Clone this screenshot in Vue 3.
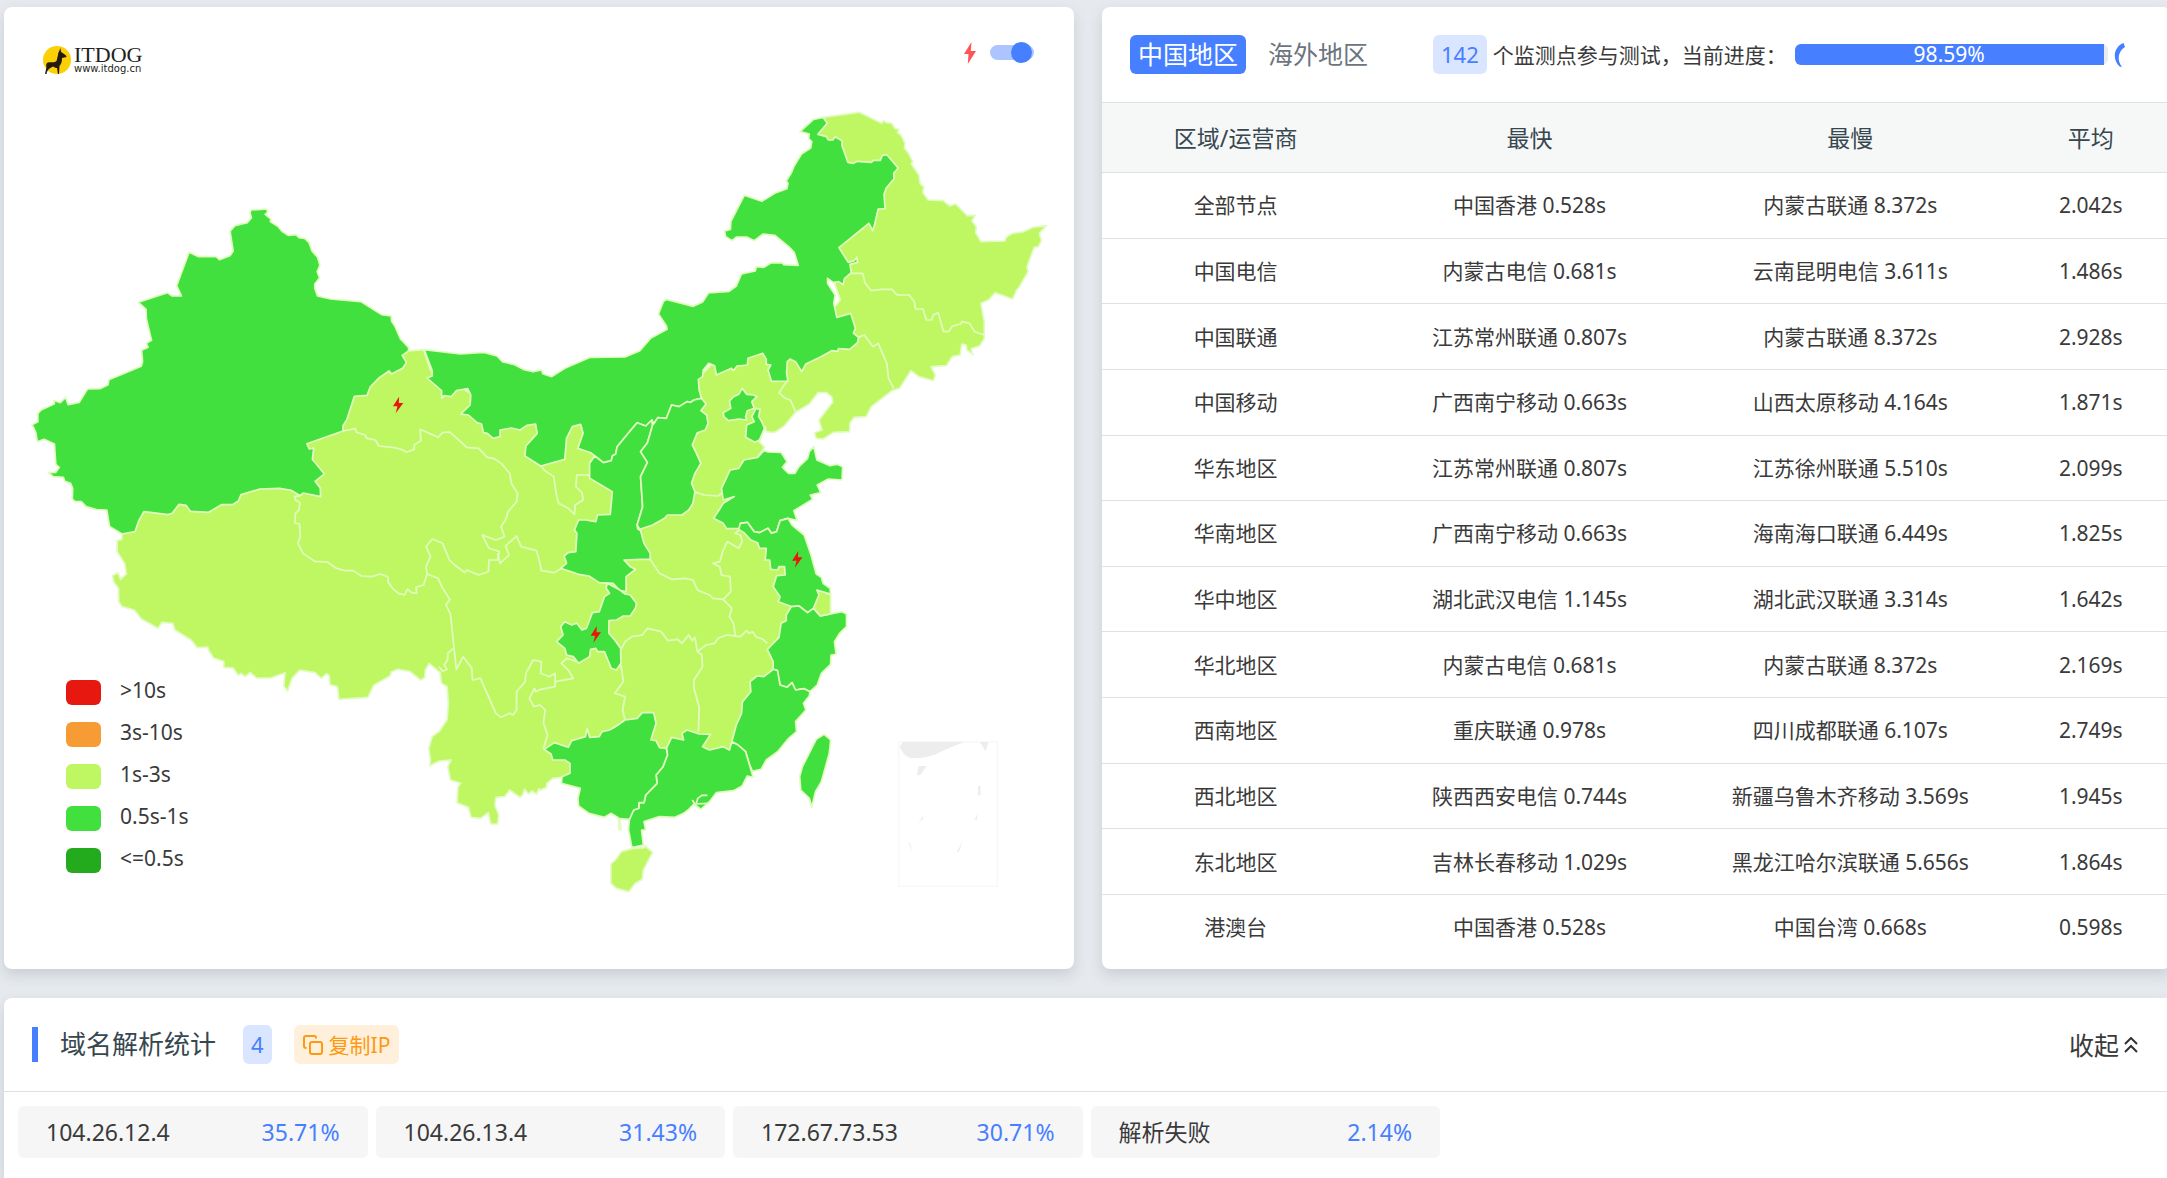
<script setup>
import { ref } from 'vue'

const showBolts = ref(true)

const legend = [
  { label: '>10s', level: 'l5' },
  { label: '3s-10s', level: 'l4' },
  { label: '1s-3s', level: 'l3' },
  { label: '0.5s-1s', level: 'l2' },
  { label: '<=0.5s', level: 'l1' },
]

const rows = [
  ['全部节点', '中国香港 0.528s', '内蒙古联通 8.372s', '2.042s'],
  ['中国电信', '内蒙古电信 0.681s', '云南昆明电信 3.611s', '1.486s'],
  ['中国联通', '江苏常州联通 0.807s', '内蒙古联通 8.372s', '2.928s'],
  ['中国移动', '广西南宁移动 0.663s', '山西太原移动 4.164s', '1.871s'],
  ['华东地区', '江苏常州联通 0.807s', '江苏徐州联通 5.510s', '2.099s'],
  ['华南地区', '广西南宁移动 0.663s', '海南海口联通 6.449s', '1.825s'],
  ['华中地区', '湖北武汉电信 1.145s', '湖北武汉联通 3.314s', '1.642s'],
  ['华北地区', '内蒙古电信 0.681s', '内蒙古联通 8.372s', '2.169s'],
  ['西南地区', '重庆联通 0.978s', '四川成都联通 6.107s', '2.749s'],
  ['西北地区', '陕西西安电信 0.744s', '新疆乌鲁木齐移动 3.569s', '1.945s'],
  ['东北地区', '吉林长春移动 1.029s', '黑龙江哈尔滨联通 5.656s', '1.864s'],
  ['港澳台', '中国香港 0.528s', '中国台湾 0.668s', '0.598s'],
]

const progress = 98.59

const addresses = [
  { ip: '104.26.12.4', share: '35.71%' },
  { ip: '104.26.13.4', share: '31.43%' },
  { ip: '172.67.73.53', share: '30.71%' },
  { ip: '解析失败', share: '2.14%' },
]

// Areas at the 1s-3s level: mainland base and Hainan.
const slowAreas = [
  '1150,1060 1186,1053 1230,1049 1250,1110 1400,1200 1560,1200 1900,1240 2010,1150 2100,1060 2240,1030 2360,1000 2440,900 2400,780 2440,640 2480,520 2420,440 2365,405 2390,352 2495,337 2560,370 2565,362 2575,368 2590,370 2598,385 2610,388 2606,398 2616,405 2628,430 2626,444 2638,460 2650,485 2646,492 2668,525 2672,552 2682,560 2680,578 2695,600 2738,602 2758,618 2775,612 2808,647 2832,646 2822,662 2835,680 2833,698 2848,725 2918,723 2922,712 2940,700 2970,696 3000,682 3038,677 3018,700 3024,722 3015,740 3003,742 2982,800 2985,815 2960,860 2952,870 2940,897 2890,878 2870,900 2848,910 2858,965 2858,1016 2845,1037 2820,1046 2825,1064 2808,1050 2805,1035 2793,1032 2788,1065 2765,1070 2748,1097 2703,1100 2716,1125 2710,1142 2668,1130 2645,1112 2612,1165 2590,1172 2530,1220 2515,1250 2480,1252 2468,1270 2467,1295 2420,1297 2390,1317 2370,1315 2365,1298 2387,1290 2378,1260 2418,1207 2415,1190 2400,1178 2375,1178 2350,1212 2310,1237 2275,1280 2248,1298 2225,1295 2222,1280 2205,1325 2220,1342 2200,1372 2250,1420 2280,1500 2280,1600 2340,1720 2372,1768 2412,1785 2412,1842 2400,1870 2350,1990 2300,2100 2200,2250 2150,2300 1950,2400 1750,2380 1660,2320 1628,2333 1605,2335 1588,2350 1587,2362 1568,2371 1565,2366 1558,2382 1545,2373 1535,2382 1523,2368 1518,2384 1510,2392 1480,2370 1465,2390 1440,2392 1437,2415 1448,2445 1445,2472 1425,2472 1418,2438 1395,2455 1368,2452 1360,2422 1327,2408 1330,2360 1338,2350 1308,2340 1300,2300 1310,2280 1275,2283 1248,2297 1250,2280 1245,2245 1255,2210 1275,2195 1298,2160 1302,2110 1298,2060 1282,2050 1278,2018 1246,1990 1235,2010 1233,2033 1221,2040 1190,2014 1155,2008 1137,2015 1132,2028 1085,2056 1068,2092 984,2098 980,2060 958,2054 956,2028 948,2021 933,2035 915,2018 870,2010 848,2035 835,2074 824,2058 828,2018 785,2034 745,2034 726,2017 712,2030 700,2020 692,2026 677,2004 650,2002 650,1984 620,1974 607,1953 603,1941 573,1943 555,1920 508,1890 502,1870 470,1867 459,1885 410,1856 390,1830 355,1820 345,1806 344,1765 330,1745 327,1727 342,1718 350,1738 367,1722 362,1690 340,1655 340,1622 354,1618 354,1602 500,1400 900,1300 1000,1150',
  '1804,2555 1835,2546 1870,2543 1872,2537 1895,2557 1868,2610 1865,2638 1845,2650 1825,2675 1790,2665 1774,2650 1774,2592 1790,2577',
]

// Areas at the 0.5s-1s level, one outline per province.
const fastAreas = [
  // Xinjiang
  '728,630 775,627 777,637 770,643 787,657 785,665 808,680 820,695 837,706 860,704 868,713 885,715 897,727 906,753 922,772 929,796 921,815 928,834 914,852 914,865 922,888 960,897 1048,905 1108,944 1136,948 1137,963 1147,979 1163,1017 1187,1043 1186,1053 1168,1066 1180,1087 1170,1104 1137,1122 1130,1113 1100,1134 1075,1161 1066,1186 1029,1189 1007,1259 996,1277 996,1293 891,1331 898,1347 911,1344 907,1378 942,1422 915,1444 930,1464 931,1490 880,1479 872,1487 845,1471 812,1465 755,1467 700,1484 692,1503 675,1514 643,1514 606,1537 553,1534 540,1516 520,1513 500,1540 488,1544 418,1535 403,1562 392,1595 354,1602 318,1579 310,1530 280,1529 250,1520 236,1505 218,1505 210,1497 211,1466 205,1450 188,1444 184,1432 155,1430 140,1418 162,1417 172,1402 162,1393 158,1332 128,1318 108,1325 104,1297 93,1274 110,1265 110,1240 118,1231 158,1211 156,1201 175,1208 190,1192 198,1214 230,1207 254,1167 290,1166 314,1154 316,1139 410,1099 414,1085 411,1051 430,1042 425,1030 440,1021 425,956 424,928 402,907 486,878 500,888 527,888 513,857 549,757 577,770 628,770 637,779 668,767 677,753 668,694 682,677 718,668 730,653 726,640',
  // Inner Mongolia
  '1232,1049 1336,1062 1405,1057 1443,1068 1460,1086 1492,1093 1522,1109 1548,1115 1573,1110 1576,1121 1602,1130 1640,1105 1714,1072 1815,1071 1858,1052 1890,1014 1937,988 1935,978 1912,942 1926,905 1935,898 2013,919 2040,906 2057,879 2117,874 2138,858 2153,822 2193,813 2196,800 2218,802 2238,789 2272,788 2275,794 2318,796 2306,757 2290,740 2250,706 2216,702 2190,722 2168,711 2138,711 2126,722 2107,710 2104,693 2121,688 2122,665 2161,586 2212,604 2253,578 2285,566 2288,550 2283,543 2297,520 2305,500 2327,462 2354,444 2357,425 2348,416 2350,402 2323,395 2362,358 2390,352 2402,370 2375,403 2400,410 2405,420 2418,420 2425,410 2445,422 2445,437 2462,487 2478,490 2490,484 2530,487 2536,481 2556,481 2562,466 2575,464 2608,504 2595,520 2596,536 2573,565 2567,583 2570,626 2550,627 2540,672 2534,692 2523,670 2436,743 2463,787 2480,782 2488,772 2490,787 2468,793 2472,818 2452,836 2448,854 2435,845 2420,848 2403,835 2403,850 2425,885 2421,910 2430,952 2470,940 2484,985 2478,999 2493,1012 2490,1028 2467,1048 2435,1046 2432,1054 2415,1052 2388,1068 2340,1092 2328,1115 2310,1085 2294,1077 2286,1085 2284,1120 2288,1143 2240,1144 2230,1110 2238,1095 2225,1093 2225,1078 2215,1060 2200,1065 2172,1075 2170,1095 2140,1098 2130,1112 2124,1105 2080,1125 2075,1097 2058,1090 2042,1110 2040,1130 2028,1138 2030,1170 2037,1195 2015,1200 2005,1207 1995,1205 1972,1220 1950,1215 1935,1255 1910,1253 1898,1272 1893,1260 1875,1278 1850,1268 1832,1290 1792,1340 1788,1362 1778,1368 1775,1382 1752,1388 1727,1368 1715,1358 1678,1345 1693,1300 1686,1273 1662,1280 1645,1315 1640,1378 1570,1398 1524,1368 1527,1338 1560,1300 1555,1272 1530,1276 1510,1290 1485,1284 1452,1290 1452,1310 1432,1315 1415,1300 1404,1298 1398,1272 1385,1268 1360,1245 1338,1242 1365,1215 1367,1185 1358,1166 1325,1172 1310,1190 1290,1187 1283,1195 1282,1172 1240,1134 1255,1128 1255,1112',
  // Shaanxi
  '1727,1368 1752,1388 1775,1382 1778,1368 1788,1362 1792,1340 1832,1290 1850,1268 1875,1278 1893,1260 1895,1275 1880,1328 1860,1355 1880,1387 1860,1430 1866,1520 1850,1575 1852,1587 1860,1592 1870,1630 1888,1660 1888,1678 1860,1678 1812,1680 1830,1700 1845,1708 1818,1730 1818,1775 1800,1772 1780,1750 1740,1748 1710,1728 1680,1723 1628,1705 1645,1690 1638,1668 1650,1658 1672,1655 1675,1600 1668,1590 1680,1560 1700,1560 1730,1565 1735,1545 1772,1543 1778,1475 1712,1435 1712,1390',
  // Shanxi
  '1893,1260 1898,1272 1910,1253 1935,1255 1950,1215 1972,1220 1995,1205 2005,1207 2015,1200 2037,1195 2050,1212 2035,1232 2052,1245 2056,1270 2048,1290 2025,1298 2010,1335 2020,1355 2035,1390 2018,1420 2008,1450 2018,1475 2012,1510 2000,1530 1980,1545 1938,1545 1930,1555 1895,1575 1858,1588 1850,1575 1866,1520 1860,1430 1880,1387 1860,1355 1880,1328 1895,1275',
  // Beijing
  '2155,1165 2168,1183 2188,1185 2198,1190 2183,1205 2190,1225 2170,1232 2165,1250 2168,1260 2145,1257 2115,1262 2102,1250 2100,1238 2122,1225 2118,1203 2130,1190 2145,1183',
  // Tianjin
  '2195,1225 2207,1228 2203,1250 2212,1265 2220,1285 2205,1320 2192,1327 2165,1312 2168,1275 2190,1265 2183,1250',
  // Shandong
  '2218,1352 2230,1356 2268,1357 2285,1385 2272,1402 2290,1420 2308,1420 2320,1400 2345,1375 2350,1355 2363,1340 2372,1380 2410,1397 2430,1393 2447,1400 2445,1440 2405,1437 2373,1455 2383,1478 2353,1485 2360,1498 2305,1532 2315,1562 2288,1555 2265,1562 2255,1595 2240,1600 2230,1585 2205,1598 2190,1595 2170,1567 2150,1570 2148,1585 2110,1586 2100,1570 2072,1555 2088,1530 2100,1510 2132,1490 2100,1500 2095,1465 2120,1410 2145,1405 2160,1380 2200,1372',
  // Jiangsu
  '2145,1588 2150,1570 2170,1567 2190,1595 2205,1598 2230,1585 2240,1600 2255,1595 2265,1562 2288,1555 2300,1575 2335,1605 2355,1665 2370,1722 2385,1732 2390,1750 2410,1765 2412,1782 2372,1770 2378,1785 2362,1825 2345,1838 2320,1818 2300,1820 2260,1805 2265,1790 2245,1760 2255,1727 2280,1725 2278,1700 2262,1700 2258,1710 2238,1708 2235,1680 2222,1680 2225,1645 2205,1645 2200,1628 2180,1620 2160,1598',
  // Zhejiang
  '2298,1820 2320,1818 2345,1838 2362,1825 2382,1848 2445,1835 2458,1842 2458,1880 2438,1900 2423,1925 2428,1963 2413,1965 2412,1993 2385,2020 2373,2055 2352,2075 2335,2066 2310,2070 2300,2048 2285,2062 2265,2055 2255,2010 2245,2008 2245,1985 2228,1948 2262,1912 2268,1870 2283,1862 2283,1845',
  // Fujian
  '2245,2008 2258,2012 2265,2055 2285,2062 2300,2048 2310,2070 2335,2066 2352,2075 2350,2088 2333,2110 2340,2130 2310,2165 2313,2195 2290,2215 2258,2255 2225,2280 2210,2308 2185,2314 2175,2290 2165,2255 2143,2235 2125,2225 2138,2175 2153,2140 2156,2105 2180,2075 2178,2045 2198,2028 2218,2030',
  // Guangdong
  '2125,2225 2143,2235 2165,2255 2175,2290 2187,2332 2170,2328 2155,2358 2130,2372 2080,2378 2060,2405 2035,2428 2015,2412 2000,2428 1985,2440 1960,2452 1915,2450 1870,2465 1875,2490 1863,2490 1868,2535 1835,2543 1825,2490 1828,2450 1840,2430 1855,2425 1855,2408 1870,2408 1875,2385 1908,2350 1905,2325 1925,2300 1938,2265 1935,2245 1950,2212 1985,2220 1980,2200 1995,2190 2030,2202 2063,2203 2040,2240 2060,2250 2100,2240 2118,2250',
  // Guangxi
  '1865,2138 1898,2138 1905,2170 1890,2220 1905,2222 1915,2243 1935,2245 1938,2265 1925,2300 1905,2325 1908,2350 1875,2385 1870,2408 1855,2408 1855,2425 1840,2430 1828,2458 1800,2456 1803,2490 1798,2490 1796,2454 1775,2440 1755,2452 1710,2440 1680,2418 1678,2395 1685,2365 1630,2350 1632,2330 1655,2320 1655,2290 1640,2280 1605,2280 1600,2262 1580,2248 1610,2228 1650,2242 1660,2222 1700,2210 1705,2185 1712,2212 1740,2210 1748,2195 1770,2190 1790,2178 1815,2160 1850,2155',
  // Chongqing
  '1763,1750 1800,1770 1815,1782 1830,1785 1848,1810 1845,1825 1830,1848 1810,1848 1790,1860 1768,1862 1768,1900 1785,1920 1802,1945 1803,1990 1790,2010 1775,2005 1765,1980 1755,1955 1735,1955 1730,1945 1715,1948 1712,1970 1680,1990 1665,1970 1645,1965 1640,1945 1616,1925 1635,1905 1628,1880 1640,1865 1660,1875 1675,1870 1690,1890 1703,1885 1720,1838 1740,1835 1755,1790 1770,1780 1760,1765',
  // Taiwan
  '2393,2203 2412,2220 2408,2260 2385,2345 2368,2375 2357,2422 2350,2395 2325,2370 2322,2330 2330,2300 2370,2218',
]

// Borders between neighbouring provinces of the same level.
const borders = [
  '872,1487 856,1490 858,1500 871,1508 868,1530 858,1540 856,1568 870,1573 872,1610 865,1630 880,1660 914,1684 950,1686 975,1704 1000,1712 1025,1712 1050,1728 1080,1730 1105,1722 1127,1731 1127,1746 1140,1765 1157,1780 1175,1785 1183,1767 1195,1778 1210,1780 1208,1762 1230,1755 1240,1722 1272,1735 1284,1762 1306,1798 1295,1815 1308,1842 1320,1960 1325,2008 1345,1970 1370,2005 1372,2040 1395,2035 1440,2140 1455,2152 1480,2140 1490,2145 1500,2130 1500,2075 1525,2045 1527,2020 1548,1980 1572,1985 1570,2020 1595,2030 1612,2020 1612,2060 1570,2068 1556,2075 1552,2065 1537,2095 1550,2120 1568,2115 1583,2130 1578,2170 1590,2205 1578,2246',
  '1315,1946 1300,1960 1300,1978 1290,1995 1298,2008 1285,2014 1275,2000',
  '996,1293 1032,1286 1035,1297 1060,1305 1065,1315 1090,1320 1100,1338 1145,1343 1170,1350 1180,1357 1203,1348 1203,1335 1222,1322 1220,1288 1272,1312 1285,1298 1305,1296 1330,1318 1355,1342 1390,1345 1415,1372 1435,1376 1455,1390 1480,1420 1485,1450 1503,1480 1500,1505 1475,1535 1470,1555 1455,1580 1465,1610 1440,1620 1400,1605 1420,1645 1450,1655 1445,1680 1420,1680 1418,1715 1390,1725 1355,1710 1350,1718 1320,1695 1305,1680 1285,1630 1255,1617 1237,1640 1250,1670 1237,1700 1240,1722',
  '1445,1660 1452,1690 1478,1665 1468,1638 1500,1608 1513,1640 1558,1652 1568,1690 1572,1712 1610,1718 1630,1705',
  '1572,1398 1582,1412 1608,1430 1615,1480 1622,1510 1650,1525 1668,1543 1670,1515 1693,1500 1690,1478 1672,1460 1675,1425 1712,1425',
  '1612,2045 1665,2035 1650,2010 1630,1990 1645,1975 1675,1985',
  '1803,1995 1810,2045 1785,2080 1815,2090 1808,2130 1815,2160',
  '1803,1950 1815,1925 1835,1910 1865,1905 1880,1885 1920,1895 1940,1922 1968,1918 1980,1930 2000,1905 2010,1922 2018,1912 2025,1955',
  '2228,1930 2215,1918 2195,1910 2185,1895 2175,1900 2168,1892 2150,1910 2110,1905 2085,1915 2075,1930 2050,1935 2025,1955 2038,1965 2040,2000 2015,2040 2015,2065 2030,2120 2028,2195',
  '2135,1908 2130,1870 2118,1850 2125,1825 2100,1798 2122,1775 2120,1730 2095,1725 2090,1700 2070,1690 2090,1685 2100,1650 2112,1625 2145,1645 2155,1625 2150,1605 2135,1600 2148,1588',
  '1888,1678 1915,1720 1950,1738 1988,1735 2012,1740 2025,1770 2060,1785 2070,1795 2100,1798',
  '2015,1475 2045,1485 2085,1488 2098,1478',
  '2472,820 2505,820 2512,850 2530,872 2560,868 2590,868 2605,885 2640,885 2655,905 2658,927 2680,927 2690,960 2705,960 2710,945 2724,938 2740,995 2755,995 2765,978 2790,972 2793,965 2815,970 2830,995 2858,1005',
  '2493,1012 2510,1005 2535,1040 2550,1030 2575,1090 2580,1135 2595,1165',
  '2285,1143 2262,1178 2280,1195 2295,1200 2310,1235',
  '2362,1825 2382,1848 2412,1842',
  '2010,2400 2018,2412 2055,2410',
  '2022,2410 2026,2395 2038,2386 2054,2386',
]

const bolts = [
  { x: 1156, y: 1215 },
  { x: 2315, y: 1678 },
  { x: 1730, y: 1903 },
]
</script>

<template>
  <main class="page">
    <section class="card map-card">
      <header class="map-head">
        <div class="logo">
          <svg class="logo-mark" viewBox="0 0 28 28" aria-hidden="true">
            <circle cx="14" cy="14" r="14" fill="#fbd007" />
            <path d="M17.600 2C17 4 15 6 15 9L13.500 15C11 17 8 16 5 16.500C3 17 3 20 3.500 21L2 28L3.500 28C4 25 5 24 6.500 22.500L10 20.500C12 22 13 22 14 22L15 28L16 28L16.500 20C18.500 18 19 15 19 12L23.500 11L23 9.500L19 6.500L18 6Z" fill="#231a10" />
          </svg>
          <div class="logo-text">
            <span class="logo-name">ITDOG</span>
            <span class="logo-url">www.itdog.cn</span>
          </div>
        </div>
        <label class="bolt-toggle">
          <svg class="bolt-icon" viewBox="0 0 12 22" role="img" aria-label="异常节点">
            <path d="M7.500 0L0 12H4.500L3.800 22L12 9H6.800Z" fill="#ff5455" />
          </svg>
          <input v-model="showBolts" class="switch" type="checkbox" role="switch" />
        </label>
      </header>

      <svg class="map" viewBox="4 87 1070 882" role="img" aria-label="中国地区延迟地图">
        <g transform="scale(.34439 .33333)">
          <polygon v-for="points in slowAreas" :key="points" class="area slow" :points="points" />
          <polygon v-for="points in fastAreas" :key="points" class="area fast" :points="points" />
          <polyline v-for="points in borders" :key="points" class="border" :points="points" />
          <g class="inset">
            <rect x="2610" y="2226" width="286" height="433" fill="none" stroke="#f7f7f7" stroke-width="4" />
            <path d="M2612 2240L2622 2226H2800Q2740 2250 2715 2264Q2640 2286 2625 2262ZM2845 2226H2870L2862 2254ZM2662 2325L2668 2298H2690L2672 2326ZM2840 2358H2847V2386H2840ZM2840 2438L2830 2460H2836ZM2680 2448L2666 2470L2682 2455ZM2638 2526L2648 2556L2644 2532ZM2796 2522L2778 2556H2784Z" fill="#ededed" />
          </g>
          <g v-if="showBolts">
            <path
              v-for="bolt in bolts"
              :key="bolt.x"
              :transform="`translate(${bolt.x} ${bolt.y})`"
              d="M3 -25L-15 4H-2L-7 25L15 -6H2Z"
              fill="#e8170c"
            />
          </g>
        </g>
      </svg>

      <ul class="legend">
        <li v-for="item in legend" :key="item.label">
          <i class="swatch" :class="item.level"></i>
          <span>{{ item.label }}</span>
        </li>
      </ul>
    </section>

    <section class="card stats-card">
      <header class="stats-head">
        <nav class="tabs">
          <button type="button" class="tab active">中国地区</button>
          <button type="button" class="tab">海外地区</button>
        </nav>
        <span class="badge">142</span>
        <span class="status">个监测点参与测试，当前进度：</span>
        <div class="progress" role="progressbar" aria-label="当前进度" :aria-valuenow="progress">
          <div class="progress-fill" :style="{ width: progress + '%' }">{{ progress }}%</div>
        </div>
        <svg class="spinner" viewBox="0 0 24 24" aria-hidden="true">
          <path d="M9.500 0C1 3 -3 15 5.500 23.500L8 24C2 16 5 8 11 4Z" fill="#467fff" />
        </svg>
      </header>
      <table>
        <thead>
          <tr>
            <th class="c-region">区域/运营商</th>
            <th class="c-fast">最快</th>
            <th class="c-slow">最慢</th>
            <th class="c-mean">平均</th>
          </tr>
        </thead>
        <tbody>
          <tr v-for="row in rows" :key="row[0]">
            <td v-for="(cell, i) in row" :key="i">{{ cell }}</td>
          </tr>
        </tbody>
      </table>
    </section>

    <section class="card dns-card">
      <header class="dns-head">
        <h2>域名解析统计</h2>
        <span class="badge">4</span>
        <button type="button" class="copy">
          <svg viewBox="0 0 20 20" fill="none" stroke="#fd9a14" stroke-width="2" aria-hidden="true">
            <rect x="7" y="7" width="12" height="12" rx="2" />
            <path d="M3.500 13H3Q1 13 1 11V3Q1 1 3 1H11Q13 1 13 3V3.500" />
          </svg>
          复制IP
        </button>
        <button type="button" class="fold">
          收起
          <svg viewBox="0 0 14 16" fill="none" stroke="#333" stroke-width="2" aria-hidden="true">
            <path d="M1 7L7 1L13 7M1 15L7 9L13 15" />
          </svg>
        </button>
      </header>
      <ul class="addresses">
        <li v-for="item in addresses" :key="item.ip">
          <span>{{ item.ip }}</span>
          <span class="share">{{ item.share }}</span>
        </li>
      </ul>
    </section>
  </main>
</template>

<style>
body {
  margin: 0;
  background: #e6eaee;
}
</style>

<style scoped>
.page {
  display: grid;
  grid-template-columns: 1070fr 1065fr;
  grid-template-rows: auto 1fr;
  gap: 29px 28px;
  box-sizing: border-box;
  min-height: 100vh;
  padding: 7px 0 0 4px;
  overflow: hidden;
  color: #3a3a3a;
  font-family: "Noto Sans", "Noto Sans CJK SC", sans-serif;
  font-size: 21px;
  line-height: 30px;
}

.card {
  background: #fff;
  border-radius: 8px;
  box-shadow: 0 6px 14px rgba(70, 85, 100, 0.18);
}

button {
  border: 0;
  background: none;
  font: inherit;
  color: inherit;
  cursor: pointer;
}

ul {
  margin: 0;
  padding: 0;
  list-style: none;
}

.badge {
  box-sizing: border-box;
  height: 39px;
  padding: 0 8px;
  border-radius: 6px;
  background: #dae5ff;
  color: #467fff;
  font-size: 22px;
  line-height: 39px;
}

/* Map */
.map-card {
  position: relative;
}

.map-head {
  display: flex;
  justify-content: space-between;
  box-sizing: border-box;
  height: 80px;
  padding: 35px 40px 0 39px;
}

.logo {
  display: flex;
  align-items: center;
  gap: 3px;
  height: 36px;
  color: #231f20;
}

.logo-mark {
  width: 28px;
  height: 28px;
}

.logo-text {
  display: flex;
  flex-direction: column;
}

.logo-name {
  font-family: "Liberation Serif", serif;
  font-size: 22px;
  line-height: 18px;
}

.logo-url {
  font-family: "DejaVu Sans", sans-serif;
  font-size: 10px;
  line-height: 10px;
}

.bolt-toggle {
  display: flex;
  align-items: center;
  gap: 14px;
  height: 21px;
}

.bolt-icon {
  width: 12px;
  height: 22px;
}

.switch {
  position: relative;
  appearance: none;
  width: 44px;
  height: 15px;
  margin: 0;
  border-radius: 8px;
  background: #ced4da;
}

.switch::before {
  position: absolute;
  top: -3px;
  left: 0;
  width: 21px;
  height: 21px;
  border-radius: 50%;
  background: #fff;
  content: "";
}

.switch:checked {
  background: #adc5ff;
}

.switch:checked::before {
  left: 21px;
  background: #467fff;
}

.map {
  display: block;
  width: 100%;
}

.area,
.border {
  stroke: #e2fbc0;
  stroke-width: 5;
  stroke-linejoin: round;
}

.slow {
  fill: #bff763;
}

.fast {
  fill: #42e03f;
}

.border {
  fill: none;
}

.legend {
  position: absolute;
  bottom: 94px;
  left: 62px;
  display: flex;
  flex-direction: column;
  gap: 12px;
}

.legend li {
  display: flex;
  align-items: center;
  gap: 19px;
}

.legend span {
  padding-bottom: 4px;
  line-height: 26px;
}

.swatch {
  width: 35px;
  height: 25px;
  border-radius: 6px;
}

.l5 { background: #e7180f; }
.l4 { background: #f79b35; }
.l3 { background: #bff763; }
.l2 { background: #42e03f; }
.l1 { background: #24aa1d; }

/* Regional statistics */
.stats-card {
  margin-right: -4px;
}

.stats-head {
  display: flex;
  align-items: center;
  box-sizing: border-box;
  height: 95px;
  padding: 0 33px 0 28px;
}

.tabs {
  display: flex;
  gap: 14px;
  margin-right: 57px;
}

.tab {
  height: 39px;
  padding: 0 8px;
  border-radius: 6px;
  color: #6c757d;
  font-size: 25px;
  line-height: 39px;
  white-space: nowrap;
}

.tab.active {
  background: #467fff;
  color: #fff;
}

.status {
  margin-left: 6px;
  white-space: nowrap;
}

.progress {
  flex: 1;
  margin-left: 8px;
  border-radius: 6px;
  background: #e9ecef;
}

.progress-fill {
  border-radius: 6px 0 0 6px;
  background: #467fff;
  color: #fff;
  line-height: 21px;
  text-align: center;
}

.spinner {
  width: 24px;
  height: 24px;
  margin-left: 6px;
}

table {
  width: 100%;
  height: 857px;
  border-collapse: collapse;
  table-layout: fixed;
  text-align: center;
}

th {
  height: 69px;
  padding: 0;
  border-top: 1px solid #dee2e6;
  background: #f6f7f7;
  color: #37474f;
  font-size: 23px;
  font-weight: 400;
}

td {
  padding: 0;
  border-top: 1px solid #dee2e6;
}

.c-region { width: 25%; }
.c-fast { width: 30%; }
.c-slow { width: 30%; }
.c-mean { width: 15%; }

/* DNS results */
.dns-card {
  grid-column: 1 / -1;
  border-radius: 8px 0 0 0;
}

.dns-head {
  display: flex;
  align-items: center;
  box-sizing: border-box;
  height: 94px;
  padding: 0 29px 0 28px;
  border-bottom: 1px solid #dee2e6;
}

h2 {
  margin: 0 27px 0 0;
  padding-left: 22px;
  border-left: 6px solid #467fff;
  color: #37474f;
  font-size: 26px;
  font-weight: 400;
  line-height: 35px;
}

.copy {
  display: flex;
  align-items: center;
  gap: 6px;
  height: 39px;
  margin-left: 22px;
  padding: 0 9px;
  border-radius: 6px;
  background: #fff0dc;
  color: #fd9a14;
}

.copy svg {
  width: 20px;
  height: 20px;
}

.fold {
  display: flex;
  align-items: center;
  gap: 5px;
  margin-left: auto;
  padding: 0;
  font-size: 25px;
}

.fold svg {
  width: 14px;
  height: 16px;
}

.addresses {
  display: grid;
  grid-template-columns: repeat(6, 1fr);
  gap: 8px;
  padding: 14px 12px 14px 14px;
}

.addresses li {
  display: flex;
  justify-content: space-between;
  padding: 0 28px;
  border-radius: 6px;
  background: #f6f6f6;
  font-size: 23px;
  line-height: 52px;
}

.share {
  color: #467fff;
}
</style>
